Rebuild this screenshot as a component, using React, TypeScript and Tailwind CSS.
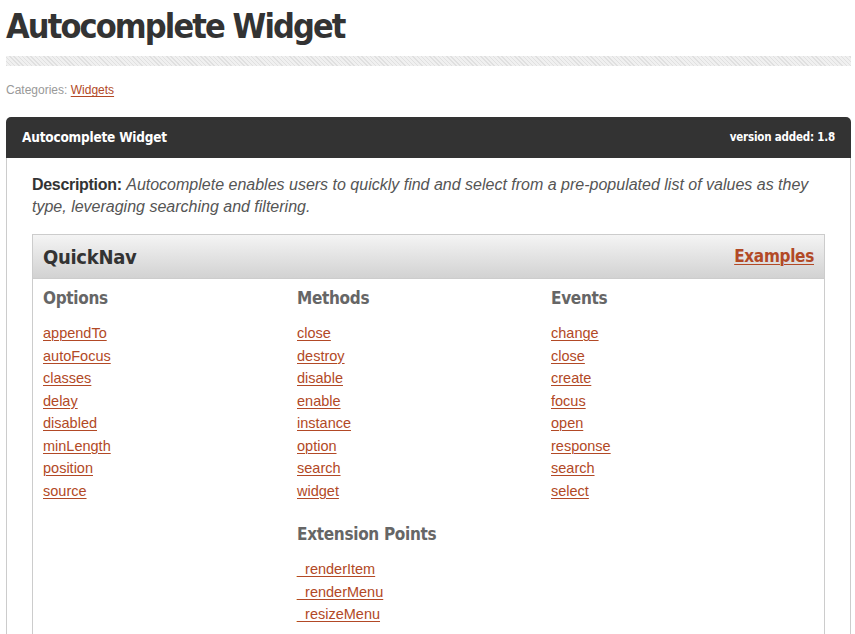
import React from 'react';

const heading = "font-['DejaVu_Sans_Condensed','DejaVu_Sans','Noto_Sans',sans-serif]";
const body = "font-['Liberation_Sans',Arial,sans-serif]";

const linkCls = 'text-[#b24926] underline underline-offset-2 decoration-1';

const columns: { title: string; items: string[] }[] = [
  { title: 'Options', items: ['appendTo', 'autoFocus', 'classes', 'delay', 'disabled', 'minLength', 'position', 'source'] },
  { title: 'Methods', items: ['close', 'destroy', 'disable', 'enable', 'instance', 'option', 'search', 'widget'] },
  { title: 'Events', items: ['change', 'close', 'create', 'focus', 'open', 'response', 'search', 'select'] },
];

function LinkList({ title, items }: { title: string; items: string[] }) {
  return (
    <div className="w-[254px]">
      <h3 className={`${heading} text-[17px] font-bold text-[#666] leading-[24px] tracking-[-0.3px]`}>{title}</h3>
      <ul className={`${body} mt-[12px] text-[14.5px] leading-[22.5px]`}>
        {items.map((it) => (
          <li key={it}>
            <a href="#" className={linkCls}>
              {it}
            </a>
          </li>
        ))}
      </ul>
    </div>
  );
}

export default function App() {
  return (
    <div className={`${body} bg-white w-[855px] h-[634px] overflow-hidden px-[6px] pr-[4px]`}>
      <h1 className={`${heading} pt-[4px] text-[34px] font-bold text-[#333] leading-[44px] tracking-[-1.9px]`}>
        Autocomplete Widget
      </h1>
      <div className="mt-[8px] h-[10px] bg-[#f0f0f0] bg-[repeating-linear-gradient(45deg,#e0e0e0_0_1px,transparent_1px_3px)]" />

      <p className="mt-[16px] text-[12px] text-[#999] leading-[16px]">
        Categories:{' '}
        <a href="#" className={linkCls}>
          Widgets
        </a>
      </p>

      {/* entry box */}
      <div className="mt-[19px]">
        <div className={`${heading} flex items-center justify-between h-[41px] px-[16px] bg-[#333] rounded-t-[5px] text-white font-bold`}>
          <span className="text-[13.5px] tracking-[-0.2px]">Autocomplete Widget</span>
          <span className="text-[11.5px] tracking-[-0.2px]">version added: 1.8</span>
        </div>
        <div className="border-x border-[#ccc] px-[25px] pt-[16px] h-[500px]">
          <p className="text-[16px] leading-[22px] text-[#555]">
            <strong className="text-[#333] tracking-[-0.3px]">Description:</strong>{' '}
            <em>
              Autocomplete enables users to quickly find and select from a pre-populated list of values as they type,
              leveraging searching and filtering.
            </em>
          </p>

          <div className="mt-[16px] border border-[#ccc] h-[420px]">
            <div className="flex items-center justify-between h-[44px] px-[10px] bg-gradient-to-b from-[#f4f4f4] to-[#d2d2d2] border-b border-[#ccc]">
              <h2 className={`${heading} text-[20px] font-bold text-[#333] tracking-[-0.3px]`}>QuickNav</h2>
              <a href="#" className={`${heading} ${linkCls} text-[17px] font-bold tracking-[-0.3px]`}>
                Examples
              </a>
            </div>
            <div className="px-[10px] pt-[7px]">
              <div className="flex">
                {columns.map((c) => (
                  <LinkList key={c.title} title={c.title} items={c.items} />
                ))}
              </div>
              <div className="flex mt-[20px]">
                <div className="w-[254px]" />
                <LinkList title="Extension Points" items={['_renderItem', '_renderMenu', '_resizeMenu']} />
              </div>
            </div>
          </div>
        </div>
      </div>
    </div>
  );
}
